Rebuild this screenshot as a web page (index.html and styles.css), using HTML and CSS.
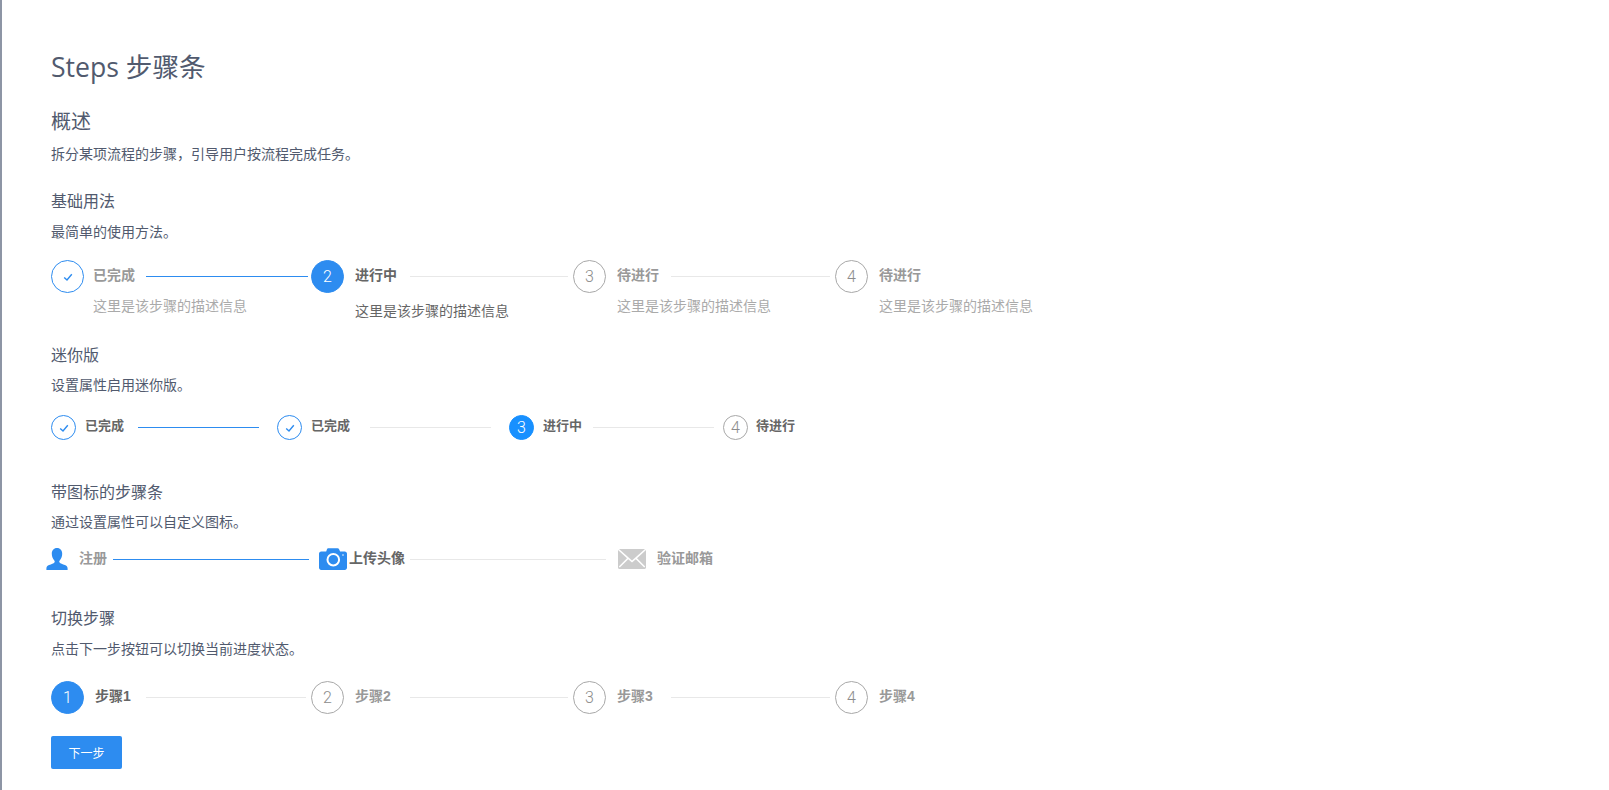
FILE: index.html
```html
<!DOCTYPE html>
<html lang="zh-CN">
<head>
<meta charset="utf-8">
<title>Steps 步骤条</title>
<link rel="stylesheet" href="styles.css">
</head>
<body>
<main class="page">
  <h1 class="page-title">Steps 步骤条</h1>
  <h2 class="overview-title">概述</h2>
  <p class="intro">拆分某项流程的步骤，引导用户按流程完成任务。</p>

  <section class="demo demo-basic">
    <h3 class="demo-title">基础用法</h3>
    <p class="intro">最简单的使用方法。</p>
    <div class="steps">
      <div class="step finish">
        <span class="circle"><svg class="check" viewBox="0 0 12 12"><path d="M2.2 6.4 5 9 9.8 3.2"/></svg></span>
        <div class="body">
          <div class="head"><span class="title">已完成</span><span class="line done"></span></div>
          <p class="desc">这里是该步骤的描述信息</p>
        </div>
      </div>
      <div class="step current">
        <span class="circle">2</span>
        <div class="body">
          <div class="head"><span class="title">进行中</span><span class="line"></span></div>
          <p class="desc">这里是该步骤的描述信息</p>
        </div>
      </div>
      <div class="step">
        <span class="circle">3</span>
        <div class="body">
          <div class="head"><span class="title">待进行</span><span class="line"></span></div>
          <p class="desc">这里是该步骤的描述信息</p>
        </div>
      </div>
      <div class="step">
        <span class="circle">4</span>
        <div class="body">
          <div class="head"><span class="title">待进行</span></div>
          <p class="desc">这里是该步骤的描述信息</p>
        </div>
      </div>
    </div>
  </section>

  <section class="demo demo-mini">
    <h3 class="demo-title">迷你版</h3>
    <p class="intro">设置属性启用迷你版。</p>
    <div class="mini-steps">
      <div class="mini-step m1 finish">
        <span class="circle"><svg class="check" viewBox="0 0 12 12"><path d="M2.2 6.4 5 9 9.8 3.2"/></svg></span>
        <span class="title">已完成</span><span class="line done"></span>
      </div>
      <div class="mini-step m2 finish">
        <span class="circle"><svg class="check" viewBox="0 0 12 12"><path d="M2.2 6.4 5 9 9.8 3.2"/></svg></span>
        <span class="title">已完成</span><span class="line"></span>
      </div>
      <div class="mini-step m3 current">
        <span class="circle">3</span>
        <span class="title">进行中</span><span class="line"></span>
      </div>
      <div class="mini-step m4">
        <span class="circle">4</span>
        <span class="title">待进行</span>
      </div>
    </div>
  </section>

  <section class="demo demo-icon">
    <h3 class="demo-title">带图标的步骤条</h3>
    <p class="intro">通过设置属性可以自定义图标。</p>
    <div class="icon-steps">
      <svg class="ico ico-user" viewBox="0 0 22 22"><path d="M11 0c3.300 0 5.200 2.500 5.200 5.800 0 2.700-1 5.100-2.500 6.600-.5.500-.6 1.300-.1 2 .6.900 3.100 1.700 5.300 2.700 1.600.7 2.700 1.700 2.700 3.400v1.500H.4V20.500c0-1.700 1.100-2.700 2.700-3.400 2.200-1 4.700-1.800 5.300-2.700.5-.7.400-1.500-.1-2C6.800 10.900 5.800 8.500 5.800 5.800 5.800 2.500 7.700 0 11 0z"/></svg>
      <span class="title t-user">注册</span>
      <span class="line done l-user"></span>
      <svg class="ico ico-camera" viewBox="0 0 28 22"><path fill-rule="evenodd" d="M9.500 .3h9c.8 0 1.400.4 1.700 1.100l.9 2.100h4.700c1.200 0 2.200 1 2.200 2.200v14.100c0 1.200-1 2.200-2.200 2.200H2.200C1 22 0 21 0 19.800V5.700c0-1.200 1-2.200 2.200-2.200h5l.7-2.100C8.100.7 8.700.3 9.500 .3zM14.300 4.900a6.800 6.800 0 1 0 0 13.600 6.800 6.800 0 0 0 0-13.600zm0 2a4.800 4.800 0 1 1 0 9.600 4.800 4.800 0 0 1 0-9.600zM24 6.200a.8.800 0 1 0 0 1.600.8.800 0 0 0 0-1.600z"/></svg>
      <span class="title t-camera">上传头像</span>
      <span class="line l-camera"></span>
      <svg class="ico ico-mail" viewBox="0 0 28 20"><path d="M1 0h26L14 11.500z"/><path d="M0 .9 9 9.300 .8 17.500l1 1L10.200 10.200 14 13.500l3.800-3.300 8.400 8.300 1-1L19 9.300 28 .9V18.500c0 .9-.7 1.500-1.500 1.500h-25C.7 20 0 19.400 0 18.500z"/></svg>
      <span class="title t-mail">验证邮箱</span>
    </div>
  </section>

  <section class="demo demo-switch">
    <h3 class="demo-title">切换步骤</h3>
    <p class="intro">点击下一步按钮可以切换当前进度状态。</p>
    <div class="steps">
      <div class="step current">
        <span class="circle">1</span>
        <div class="body"><div class="head"><span class="title">步骤1</span><span class="line"></span></div></div>
      </div>
      <div class="step">
        <span class="circle">2</span>
        <div class="body"><div class="head"><span class="title">步骤2</span><span class="line"></span></div></div>
      </div>
      <div class="step">
        <span class="circle">3</span>
        <div class="body"><div class="head"><span class="title">步骤3</span><span class="line"></span></div></div>
      </div>
      <div class="step">
        <span class="circle">4</span>
        <div class="body"><div class="head"><span class="title">步骤4</span></div></div>
      </div>
    </div>
    <button class="next-btn" type="button">下一步</button>
  </section>
</main>
</body>
</html>
```
FILE: styles.css
```css
* { box-sizing: border-box; }
html, body { margin: 0; height: 100%; }
body {
  font-family: "Open Sans", "Noto Sans CJK SC", sans-serif;
  color: #515a6e;
  background: #fff;
  overflow: hidden;
}
.page {
  height: 790px;
  border-left: 2px solid #8d95a5;
  padding: 47px 0 0 49px;
}
h1, h2, h3, p { margin: 0; font-weight: 400; }
.page-title { font-size: 26.6px; line-height: 40px; }
.overview-title { font-size: 20px; line-height: 28px; margin-top: 21px; }
.intro { font-size: 14px; line-height: 20px; margin-top: 8px; }
.demo-title { font-size: 16px; line-height: 24px; }
.demo-basic { margin-top: 25px; }
.demo-basic .intro { margin-top: 9px; }
.demo-mini { margin-top: 22px; }
.demo-icon { margin-top: 40px; }
.demo-switch { margin-top: 36px; }
.demo-switch .intro { margin-top: 9px; }

.steps { display: flex; margin-top: 18px; }
.step { display: flex; width: 262px; flex: none; padding-right: 5px; }
.step:first-child { width: 260px; }
.step:last-child { width: auto; padding-right: 0; }
.step.finish { padding-right: 3px; }
.circle {
  display: flex;
  align-items: center;
  justify-content: center;
  flex: none;
  width: 33px;
  height: 33px;
  border: 1px solid #a8a8a8;
  border-radius: 50%;
  font-family: "Roboto", sans-serif;
  font-weight: 300;
  font-size: 16px;
  color: #8c8c8c;
  background: #fff;
}
.body { flex: 1; min-width: 0; margin-left: 11px; }
.finish .body { margin-left: 9px; }
.head { display: flex; align-items: center; height: 33px; }
.title { font-family: "Liberation Sans", "Noto Sans CJK SC", sans-serif; font-size: 14px; font-weight: 700; line-height: 20px; color: #999; white-space: nowrap; flex: none; margin-bottom: 4px; }
.head .title { min-width: 42px; }
.line { flex: 1; height: 1px; background: #e8e8e8; margin-left: 12px; }
.line.done { background: #2d8cf0; margin-left: 11px; }
.desc { font-size: 14px; line-height: 20px; color: #aaa; margin-top: 3px; }
.check { width: 12px; height: 12px; fill: none; stroke: #2d8cf0; stroke-width: 1.4; }
.finish .circle { border-color: #2d8cf0; }
.current .circle { border-color: #2d8cf0; background: #2d8cf0; color: #fff; }
.current .title { color: #666; }
.current .desc { color: #666; margin-top: 8px; }
.current .line { margin-left: 13px; }
.demo-switch .current .line { margin-left: 9px; }
.demo-switch .step:nth-child(2) .line { margin-left: 13px; }

.mini-steps { display: flex; align-items: center; margin-top: 20px; height: 25px; }
.mini-step { display: flex; align-items: center; flex: none; }
.mini-step .circle { width: 25px; height: 25px; }
.mini-step .title { color: #666; font-size: 13px; margin-left: 9px; margin-bottom: 3px; }
.mini-step .line { flex: none; width: 121px; }
.m1 .line.done { margin-left: 14px; margin-right: 18px; }
.m2 .line { margin-left: 20px; margin-right: 18px; }
.m3 .circle { border-color: #1890ff; background: #1890ff; }
.m3 .line { margin-left: 11px; margin-right: 9px; }
.mini-step.m4 .title { margin-left: 8px; }

.icon-steps { display: flex; align-items: center; height: 22px; margin-top: 16px; margin-left: -5px; }
.ico { flex: none; display: block; }
.ico-user { width: 22px; height: 22px; fill: #2d8cf0; }
.ico-camera { width: 28px; height: 22px; fill: #2d8cf0; }
.ico-mail { width: 28px; height: 20px; fill: #ccc; }
.icon-steps .title { margin-bottom: 2px; }
.t-user { margin-left: 11px; }
.t-camera { color: #666; margin-left: 2px; }
.t-mail { margin-left: 11px; }
.line.l-user { flex: none; width: 196px; margin-left: 6px; margin-right: 10px; }
.line.l-camera { flex: none; width: 196px; margin-left: 5px; margin-right: 12px; }

.demo-switch .steps { margin-top: 22px; }
.next-btn {
  display: block;
  width: 71px;
  height: 33px;
  margin-top: 22px;
  padding: 0;
  border: 0;
  border-radius: 2px;
  background: #2d8cf0;
  color: #fff;
  font-family: inherit;
  font-size: 12px;
}
```
